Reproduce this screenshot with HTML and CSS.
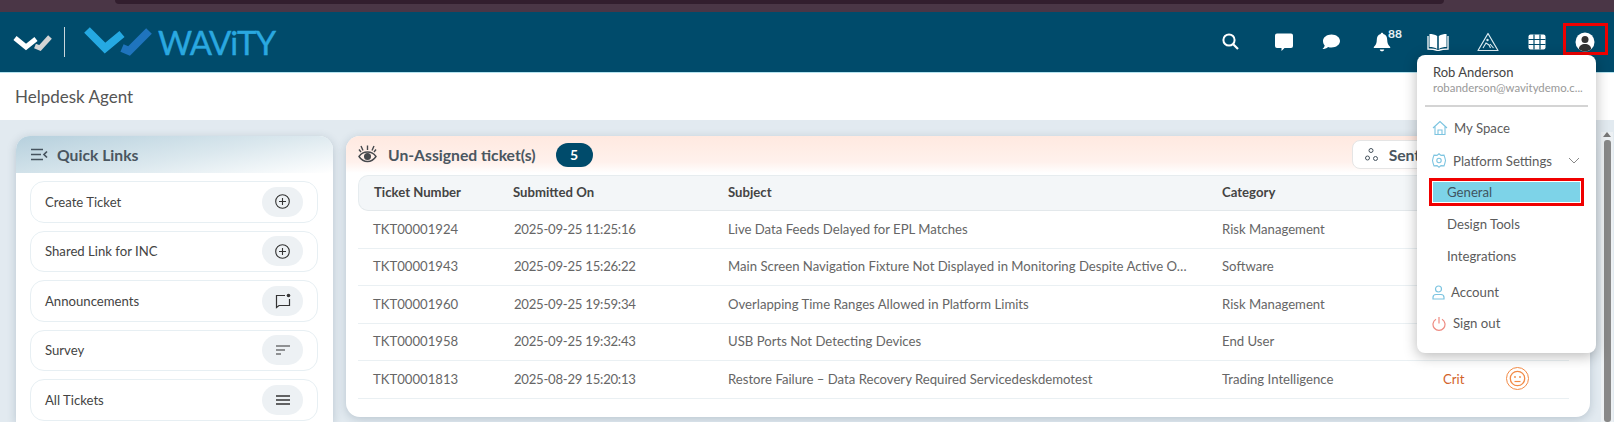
FILE: index.html
```html
<!DOCTYPE html>
<html lang="en">
<head>
    <meta charset="UTF-8">
    <title>Helpdesk Agent</title>
    <link rel="stylesheet" href="styles.css">
</head>
<body>
    <div class="browser-strip"><div class="browser-tab"></div></div>

    <header class="topbar">
        <div class="brand">
            <svg class="brand-mark" width="40" height="20" viewBox="0 0 40 20">
                <polyline points="2,6 13,15 23,7" fill="none" stroke="#fff" stroke-width="5"/>
                <polyline points="22,14 27,16 37,5" fill="none" stroke="#d4d4d4" stroke-width="5"/>
            </svg>
            <span class="brand-divider"></span>
            <svg class="brand-logo" width="70" height="30" viewBox="0 0 70 30">
                <polyline points="3,3 21,21 38,7" fill="none" stroke="#25a9e2" stroke-width="8"/>
                <polyline points="38,21 45,24 65,4" fill="none" stroke="#1f74bd" stroke-width="8"/>
            </svg>
            <span class="brand-name">WAViTY</span>
        </div>
        <nav class="nav-icons">
            <a class="nav-btn"><svg width="20" height="20" viewBox="0 0 20 20"><circle cx="8" cy="8" r="5.6" fill="none" stroke="#fff" stroke-width="2"/><line x1="12.2" y1="12.2" x2="17" y2="17" stroke="#fff" stroke-width="2.2"/></svg></a>
            <a class="nav-btn nav-gap-8"><svg width="20" height="20" viewBox="0 0 20 20"><path d="M3 1.500h14a2 2 0 0 1 2 2v10.500a2 2 0 0 1-2 2h-6.500l-3 3v-3H3a2 2 0 0 1-2-2V3.500a2 2 0 0 1 2-2z" fill="#fff"/></svg></a>
            <a class="nav-btn nav-gap-2"><svg width="20" height="20" viewBox="0 0 20 20"><path d="M10.500 2.500c4.700 0 8.500 2.900 8.500 6.500s-3.800 6.500-8.500 6.500c-1.200 0-2.400-.2-3.400-.6C5.500 16.300 3.600 17 1.500 17c1-.9 1.900-2.200 2.200-3.500C2.600 12.300 2 10.700 2 9c0-3.600 3.800-6.500 8.500-6.500z" fill="#fff"/></svg></a>
            <a class="nav-btn nav-gap-6 nav-bell"><svg width="18" height="20" viewBox="0 0 18 20"><path d="M9 .8c.8 0 1.300.6 1.300 1.300 2.700.6 3.900 2.900 3.900 5.700 0 3.500 1 5.300 3 7.200v1H.8v-1c2-1.900 3-3.700 3-7.200 0-2.800 1.200-5.100 3.900-5.700C7.700 1.400 8.200.8 9 .8z" fill="#fff"/><path d="M6.800 17.500h4.400c0 1-1 1.800-2.200 1.800s-2.200-.8-2.200-1.800z" fill="#fff"/></svg><span class="bell-count">88</span></a>
            <a class="nav-btn nav-gap-11"><svg width="22" height="18" viewBox="0 0 22 18"><path d="M10.200 3C8 1.600 5 1 2.500 1v13c3 0 5.500.5 7.700 2V3zM11.800 3c2.200-1.400 5.200-2 7.700-2v13c-3 0-5.500.5-7.700 2V3z" fill="#fff"/><path d="M1 3v13c3.500 0 7 .3 10 1.800 3-1.500 6.500-1.800 10-1.800V3" fill="none" stroke="#fff" stroke-width="1.300"/></svg></a>
            <a class="nav-btn nav-gap-5"><svg width="22" height="20" viewBox="0 0 22 20"><path d="M11 1.500 21 18.500H1z" fill="none" stroke="#dfeef4" stroke-width="1.200" stroke-linejoin="round"/><circle cx="10.500" cy="8" r="1.200" fill="#dfeef4"/><path d="M6 16l3-5 3 2 1.500 3M13 12l3.500 4" fill="none" stroke="#dfeef4" stroke-width="1.100"/></svg></a>
            <a class="nav-btn nav-gap-4"><svg width="18" height="16" viewBox="0 0 18 16"><rect x=".5" y=".5" width="17" height="15" rx="2" fill="#fff"/><path d="M6 .5v15M12 .5v15M.5 5.500h17M.5 10.500h17" stroke="#004b6b" stroke-width="1.200"/></svg></a>
            <a class="nav-btn nav-gap-4 nav-user"><svg width="20" height="20" viewBox="0 0 20 20"><circle cx="10" cy="10" r="9.500" fill="#fff"/><circle cx="10" cy="7.500" r="3.500" fill="#333"/><path d="M3.800 17c.4-3.500 2.800-5 6.200-5s5.800 1.500 6.200 5c-1.700 1.600-3.900 2.500-6.200 2.500S5.500 18.600 3.800 17z" fill="#333"/></svg></a>
        </nav>
    </header>

    <div class="user-menu">
        <div class="user-name">Rob Anderson</div>
        <div class="user-mail">robanderson@wavitydemo.c...</div>
        <div class="user-divider"></div>
        <a class="menu-item menu-home"><svg width="16" height="16" viewBox="0 0 16 16" fill="none" stroke="#7cc4e0" stroke-width="1.100"><path d="M1 8 8 1.500 15 8M3 6.500V14.500h10V6.500M6 14.500V10h4v4.500"/></svg><span>My Space</span></a>
        <a class="menu-item menu-settings"><svg width="14" height="15" viewBox="0 0 14 15" fill="none" stroke="#7cc4e0" stroke-width="1.100"><path d="M7 .8 9 2.400l3-.3.900 2.800L13.500 7.500l-.6 2.600-.9 2.800-3-.3L7 14.200l-2-1.600-3 .3-.9-2.800L.5 7.500l.6-2.600L2 2.100l3 .3z"/><circle cx="7" cy="7.500" r="2.200"/></svg><span>Platform Settings</span><svg class="menu-chevron" width="12" height="7" viewBox="0 0 12 7" fill="none" stroke="#888" stroke-width="1"><path d="M1 1l5 5 5-5"/></svg></a>
        <a class="menu-sub menu-active">General</a>
        <a class="menu-sub menu-design">Design Tools</a>
        <a class="menu-sub">Integrations</a>
        <a class="menu-item menu-account"><svg width="13" height="15" viewBox="0 0 13 15" fill="none" stroke="#7cc4e0" stroke-width="1.200"><circle cx="6.500" cy="4" r="3"/><path d="M1 14v-1.500C1 10.500 2.500 9.500 4 9.500h5c1.500 0 3 1 3 3V14z"/></svg><span>Account</span></a>
        <a class="menu-item menu-signout"><svg width="14" height="15" viewBox="0 0 14 15" fill="none" stroke="#ee8a80" stroke-width="1.200"><path d="M4 3.200a6 6 0 1 0 6 0M7 1v6.500"/></svg><span>Sign out</span></a>
    </div>

    <div class="page-title">Helpdesk Agent</div>

    <div class="content">
        <aside class="card quick-links">
            <div class="card-head quick-head">
                <svg width="18" height="13" viewBox="0 0 18 13" fill="none" stroke="#46535e" stroke-width="1.700"><path d="M1 1.500h12M1 6.500h10M1 11.500h12M17 3.500l-3 3 3 3"/></svg>
                <h2>Quick Links</h2>
            </div>
            <div class="quick-list">
                <a class="quick-row"><span>Create Ticket</span><span class="quick-pill"><svg width="15" height="15" viewBox="0 0 15 15" fill="none" stroke="#333" stroke-width="1.100"><circle cx="7.500" cy="7.500" r="6.800"/><path d="M7.500 4v7M4 7.500h7"/></svg></span></a>
                <a class="quick-row"><span>Shared Link for INC</span><span class="quick-pill"><svg width="15" height="15" viewBox="0 0 15 15" fill="none" stroke="#333" stroke-width="1.100"><circle cx="7.500" cy="7.500" r="6.800"/><path d="M7.500 4v7M4 7.500h7"/></svg></span></a>
                <a class="quick-row"><span>Announcements</span><span class="quick-pill"><svg width="16" height="16" viewBox="0 0 16 16" fill="none" stroke="#333" stroke-width="1.200"><path d="M10 2.500H1.500v12l2.500-2h10.500V6"/><circle cx="13.500" cy="2.500" r="1.800" fill="#333" stroke="none"/></svg></span></a>
                <a class="quick-row"><span>Survey</span><span class="quick-pill"><svg width="14" height="10" viewBox="0 0 14 10" fill="none" stroke="#333" stroke-width="1.200"><path d="M0 1h14M0 5h9M0 9h5"/></svg></span></a>
                <a class="quick-row"><span>All Tickets</span><span class="quick-pill"><svg width="14" height="10" viewBox="0 0 14 10" fill="none" stroke="#333" stroke-width="1.300"><path d="M0 1h14M0 5h14M0 9h14"/></svg></span></a>
            </div>
        </aside>

        <main class="card tickets">
            <div class="card-head tickets-head">
                <svg width="19" height="20" viewBox="0 0 19 20" fill="none" stroke="#46494d" stroke-width="1.400"><path d="M1 11.500C3 8.500 6 7 9.500 7s6.500 1.500 8.500 4.500c-2 3-5 5-8.500 5S3 14.500 1 11.500z"/><circle cx="9.500" cy="11.500" r="2.800" fill="#46494d"/><path d="M3 1l2 4.500M9.500 .5v4.500M16 1l-2 4.500M1 4.500l2 2.500M18 4.500l-2 2.500"/></svg>
                <h2>Un-Assigned ticket(s)</h2>
                <span class="count-badge">5</span>
                <a class="sentiment-btn"><svg width="13" height="13" viewBox="0 0 13 13" fill="none" stroke="#46535e" stroke-width="1"><circle cx="6" cy="2.500" r="2"/><circle cx="2.500" cy="10" r="2"/><circle cx="10.500" cy="10.500" r="2"/></svg><span class="sentiment-label">Sent</span></a>
            </div>
            <table class="ticket-table">
                <thead>
                    <tr><th class="col-num">Ticket Number</th><th class="col-date">Submitted On</th><th class="col-subject">Subject</th><th class="col-cat">Category</th><th class="col-pri"></th><th></th></tr>
                </thead>
                <tbody>
                    <tr><td>TKT00001924</td><td>2025-09-25 11:25:16</td><td>Live Data Feeds Delayed for EPL Matches</td><td>Risk Management</td><td></td><td></td></tr>
                    <tr><td>TKT00001943</td><td>2025-09-25 15:26:22</td><td>Main Screen Navigation Fixture Not Displayed in Monitoring Despite Active O…</td><td>Software</td><td></td><td></td></tr>
                    <tr><td>TKT00001960</td><td>2025-09-25 19:59:34</td><td>Overlapping Time Ranges Allowed in Platform Limits</td><td>Risk Management</td><td></td><td></td></tr>
                    <tr><td>TKT00001958</td><td>2025-09-25 19:32:43</td><td>USB Ports Not Detecting Devices</td><td>End User</td><td></td><td></td></tr>
                    <tr>
                        <td>TKT00001813</td><td>2025-08-29 15:20:13</td><td>Restore Failure – Data Recovery Required Servicedeskdemotest</td><td>Trading Intelligence</td>
                        <td class="priority-crit">Crit</td>
                        <td><svg class="mood-icon" width="23" height="23" viewBox="0 0 23 23" fill="none" stroke="#f28a45"><circle cx="11.500" cy="11.500" r="11"/><circle cx="11.500" cy="11.500" r="7.200" stroke-width="1.300"/><circle cx="9" cy="10" r=".9" fill="#f28a45" stroke="none"/><circle cx="14" cy="10" r=".9" fill="#f28a45" stroke="none"/><path d="M8.500 14.500h6" stroke-width="1.200"/></svg></td>
                    </tr>
                </tbody>
            </table>
        </main>

        <div class="scroll-bar">
            <span class="scroll-arrow"></span>
            <span class="scroll-thumb"></span>
        </div>
    </div>
</body>
</html>
```

FILE: styles.css
```css
* {
    box-sizing: border-box;
}
html, body {
    height: 422px;
    overflow: hidden;
}
body {
    position: relative;
    margin: 0;
    font-family: 'Lato', sans-serif;
    background-color: #e2eaf0;
    color: #444;
}
h2 {
    margin: 0;
    font-size: 15.7px;
    font-weight: 700;
    color: #4a5660;
}

/* browser strip above the app */
.browser-strip {
    height: 12px;
    background-color: #4a3646;
    padding: 0 170px 0 115px;
}
.browser-tab {
    height: 4px;
    background-color: #321e2e;
    border-radius: 0 0 8px 8px;
}

/* top bar */
.topbar {
    display: flex;
    align-items: center;
    height: 61px;
    padding: 0 6px 1px 13px;
    background-color: #004b6b;
    border-bottom: 1px solid #b5e3ef;
}
.brand {
    display: flex;
    align-items: center;
}
.brand-divider {
    width: 1px;
    height: 30px;
    margin: 0 19px 0 11px;
    background-color: #c9d6dc;
}
.brand-name {
    margin-left: 4px;
    font-size: 33px;
    line-height: 40px;
    letter-spacing: -1.1px;
    color: #2aa8e0;
    -webkit-text-stroke: 0.4px #2aa8e0;
}
.nav-icons {
    display: flex;
    align-items: center;
    margin-left: auto;
}
.nav-btn {
    position: relative;
    display: flex;
    justify-content: center;
    align-items: center;
    width: 45px;
    height: 32px;
}
.nav-gap-2 { margin-left: 2px; }
.nav-gap-4 { margin-left: 4px; }
.nav-gap-5 { margin-left: 5px; }
.nav-gap-6 { margin-left: 6px; }
.nav-gap-8 { margin-left: 8px; }
.nav-gap-11 { margin-left: 11px; }
.bell-count {
    position: absolute;
    top: 0;
    left: 29px;
    font-size: 12px;
    font-weight: 700;
    color: #e8f1f5;
}
.nav-user {
    margin-bottom: 6px;
    padding: 6px 2px 0 0;
    border: 3px solid #f00000;
}

/* user dropdown */
.user-menu {
    position: absolute;
    top: 55px;
    left: 1417px;
    z-index: 5;
    width: 179px;
    height: 298px;
    padding-top: 7px;
    background: #fff;
    border-radius: 8px;
    box-shadow: 0 3px 14px rgba(0, 0, 0, 0.28);
}
.user-name {
    padding-left: 16px;
    font-size: 13px;
    line-height: 20px;
    color: #444;
}
.user-mail {
    margin-top: -2px;
    padding-left: 16px;
    font-size: 11.4px;
    line-height: 16px;
    color: #999;
}
.user-divider {
    height: 2px;
    margin: 9px 8px 4px;
    background-color: #d4d4d4;
}
.menu-item {
    display: flex;
    align-items: center;
    gap: 8px;
    height: 33px;
    padding-left: 15px;
    font-size: 13.2px;
    color: #5c5c5c;
}
.menu-home {
    gap: 6px;
}
.menu-settings {
    gap: 7px;
    margin-bottom: 1px;
}
.menu-chevron {
    margin-left: 9px;
}
.menu-sub {
    display: block;
    height: 31px;
    padding-left: 30px;
    font-size: 13.2px;
    line-height: 31px;
    color: #5c5c5c;
}
.menu-active {
    width: 155px;
    height: 28px;
    margin-left: 12px;
    padding-left: 15px;
    border: 3px solid #f00000;
    background-color: #7dd3e8;
    box-shadow: inset 0 0 0 1px #fff;
    line-height: 22px;
    color: #3f5560;
}
.menu-design {
    height: 32px;
    margin-top: 3px;
}
.menu-account {
    margin-top: 4px;
    height: 32px;
    gap: 6px;
}
.menu-signout {
    height: 30px;
    gap: 7px;
}

.page-title {
    height: 47px;
    padding-left: 15px;
    background: #fff;
    font-size: 17px;
    line-height: 48px;
    color: #555;
}

/* main area */
.content {
    display: flex;
    align-items: flex-start;
    padding: 16px 1px 0 16px;
}
.card {
    background: #fff;
    border-radius: 14px;
    box-shadow: 0 2px 10px rgba(40, 70, 90, 0.22);
    overflow: hidden;
}
.card-head {
    display: flex;
    align-items: center;
    height: 37px;
}
.quick-links {
    width: 317px;
    height: 286px;
    flex-shrink: 0;
    border-radius: 14px 14px 0 0;
}
.quick-head {
    gap: 9px;
    padding-left: 14px;
    background: linear-gradient(170deg, #b6d0dd 0%, #dbe8ee 55%, #ffffff 100%);
}
.quick-list {
    display: flex;
    flex-direction: column;
    gap: 8px;
    padding: 8px 15px 0 14px;
}
.quick-row {
    display: flex;
    justify-content: space-between;
    align-items: center;
    height: 41.5px;
    padding: 0 14px;
    border: 1px solid #e7eff3;
    border-radius: 14px;
    font-size: 13.15px;
    color: #444;
}
.quick-pill {
    display: flex;
    justify-content: center;
    align-items: center;
    width: 41px;
    height: 30px;
    border-radius: 15px;
    background-color: #edf1f4;
}

.tickets {
    width: 1244px;
    height: 281px;
    margin-left: 13px;
    flex-shrink: 0;
}
.tickets-head {
    padding-left: 12px;
    background: linear-gradient(180deg, #ffe9e0 0%, #fff1ec 70%, #ffffff 100%);
}
.tickets-head h2 {
    margin-left: 11px;
}
.count-badge {
    width: 37px;
    height: 24px;
    margin-left: 20px;
    border-radius: 12px;
    background-color: #004b6b;
    color: #fff;
    font-size: 14px;
    font-weight: 700;
    line-height: 24px;
    text-align: center;
}
.sentiment-btn {
    display: flex;
    align-items: center;
    gap: 11px;
    width: 150px;
    height: 29px;
    margin-left: 759px;
    padding-left: 12px;
    border: 1px solid #e5e5e5;
    border-radius: 8px;
    background: #fff;
    font-size: 15.7px;
    font-weight: 700;
    color: #4a5660;
}
.sentiment-label {
    width: 28px;
    overflow: hidden;
}

.ticket-table {
    width: 1211px;
    margin: 2px 0 0 12px;
    border-collapse: separate;
    border-spacing: 0;
    table-layout: fixed;
    font-size: 13.15px;
}
.ticket-table th {
    height: 36px;
    padding: 0 0 2px 15px;
    background-color: #f3f6f8;
    border-top: 1px solid #e6ecef;
    border-bottom: 1px solid #e3e8eb;
    text-align: left;
    font-weight: 700;
    color: #444;
}
.ticket-table th:first-child {
    border-left: 1px solid #e6ecef;
    border-radius: 10px 0 0 10px;
}
.ticket-table td {
    height: 37.5px;
    padding: 0 0 1px 15px;
    border-bottom: 1px solid #eaf0f3;
    color: #666;
    white-space: nowrap;
    overflow: hidden;
}
.ticket-table td:nth-child(2) {
    padding-left: 16px;
    letter-spacing: -0.25px;
}
.col-num { width: 140px; }
.col-date { width: 215px; }
.col-subject { width: 494px; }
.col-cat { width: 221px; }
.col-pri { width: 70px; }
.ticket-table td.priority-crit {
    color: #d2622a;
}
.mood-icon {
    display: block;
    margin-left: -7px;
}

.scroll-bar {
    display: flex;
    flex-direction: column;
    align-items: center;
    width: 12px;
    height: 290px;
    margin: -4px 0 0 11px;
    background-color: #edf1f4;
}
.scroll-arrow {
    width: 0;
    height: 0;
    border: 4px solid transparent;
    border-top: 0;
    border-bottom: 5px solid #777;
}
.scroll-thumb {
    width: 7px;
    height: 282px;
    margin-top: 3px;
    border-radius: 3px;
    background-color: #888;
}
```
